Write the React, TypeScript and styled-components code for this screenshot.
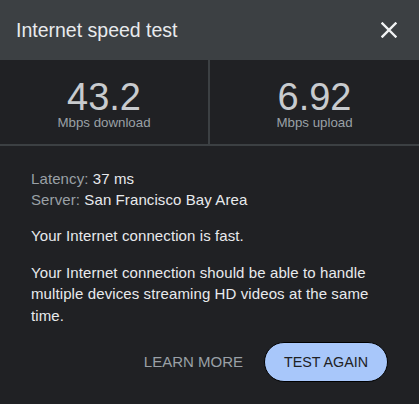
import React from "react";
import styled, { createGlobalStyle } from "styled-components";

const GlobalStyle = createGlobalStyle`
  html, body {
    margin: 0;
    padding: 0;
    background: #202124;
  }
  body {
    font-family: "Liberation Sans", Arial, sans-serif;
  }
`;

const Card = styled.div`
  width: 419px;
  height: 404px;
  background: #202124;
  display: flex;
  flex-direction: column;
  overflow: hidden;
`;

const Header = styled.div`
  height: 60px;
  background: #3c4043;
  display: flex;
  align-items: center;
  justify-content: space-between;
  padding: 0 20px 0 16px;
  box-sizing: border-box;
`;

const Title = styled.h1`
  margin: 0;
  font-size: 19.5px;
  font-weight: 400;
  color: #e8eaed;
`;

const CloseButton = styled.button`
  border: none;
  background: none;
  padding: 0;
  width: 20px;
  height: 20px;
  display: flex;
  align-items: center;
  justify-content: center;
  cursor: pointer;
`;

const Stats = styled.div`
  display: grid;
  grid-template-columns: 208px 2px 1fr;
  height: 84px;
  border-bottom: 2px solid #3c4043;
`;

const Divider = styled.div`
  background: #3c4043;
`;

const Stat = styled.div`
  display: flex;
  flex-direction: column;
  align-items: center;
  padding-top: 15.6px;
`;

const StatValue = styled.div`
  font-size: 38px;
  line-height: 42.4px;
  color: #c8cbce;
`;

const StatLabel = styled.div`
  font-size: 13.3px;
  line-height: 10px;
  color: #9aa0a6;
`;

const Body = styled.div`
  padding: 22px 31px 0 31px;
  flex: 1;
  display: flex;
  flex-direction: column;
  font-size: 15px;
  letter-spacing: 0.1px;
`;

const InfoLine = styled.div`
  line-height: 21px;
  color: #e8eaed;
`;

const InfoLabel = styled.span`
  color: #9aa0a6;
`;

const Paragraph = styled.p`
  margin: 15px 0 0 0;
  line-height: 21.7px;
  color: #e8eaed;
`;

const Actions = styled.div`
  display: flex;
  justify-content: flex-end;
  align-items: center;
  gap: 21px;
  margin-top: 15px;
`;

const TextButton = styled.button`
  border: none;
  background: none;
  padding: 0;
  font-family: inherit;
  font-size: 15px;
  color: #9aa0a6;
  cursor: pointer;
`;

const PillButton = styled.button`
  height: 40px;
  padding: 0 19px;
  border-radius: 20px;
  border: 1px solid #000;
  background: #a8c7fa;
  color: #202124;
  font-family: inherit;
  font-size: 14.3px;
  cursor: pointer;
`;

function CloseIcon() {
  return (
    <svg width="16" height="16" viewBox="0 0 16 16">
      <path d="M1.5 1.5 L14.5 14.5 M14.5 1.5 L1.5 14.5" stroke="#f1f3f4" strokeWidth="2.4" strokeLinecap="square" />
    </svg>
  );
}

export default function App() {
  return (
    <Card>
      <GlobalStyle />
      <Header>
        <Title>Internet speed test</Title>
        <CloseButton aria-label="Close">
          <CloseIcon />
        </CloseButton>
      </Header>
      <Stats>
        <Stat>
          <StatValue>43.2</StatValue>
          <StatLabel>Mbps download</StatLabel>
        </Stat>
        <Divider />
        <Stat>
          <StatValue>6.92</StatValue>
          <StatLabel>Mbps upload</StatLabel>
        </Stat>
      </Stats>
      <Body>
        <InfoLine>
          <InfoLabel>Latency: </InfoLabel>37 ms
        </InfoLine>
        <InfoLine>
          <InfoLabel>Server: </InfoLabel>San Francisco Bay Area
        </InfoLine>
        <Paragraph>Your Internet connection is fast.</Paragraph>
        <Paragraph>
          Your Internet connection should be able to handle multiple devices streaming HD videos at the same time.
        </Paragraph>
        <Actions>
          <TextButton>LEARN MORE</TextButton>
          <PillButton>TEST AGAIN</PillButton>
        </Actions>
      </Body>
    </Card>
  );
}
